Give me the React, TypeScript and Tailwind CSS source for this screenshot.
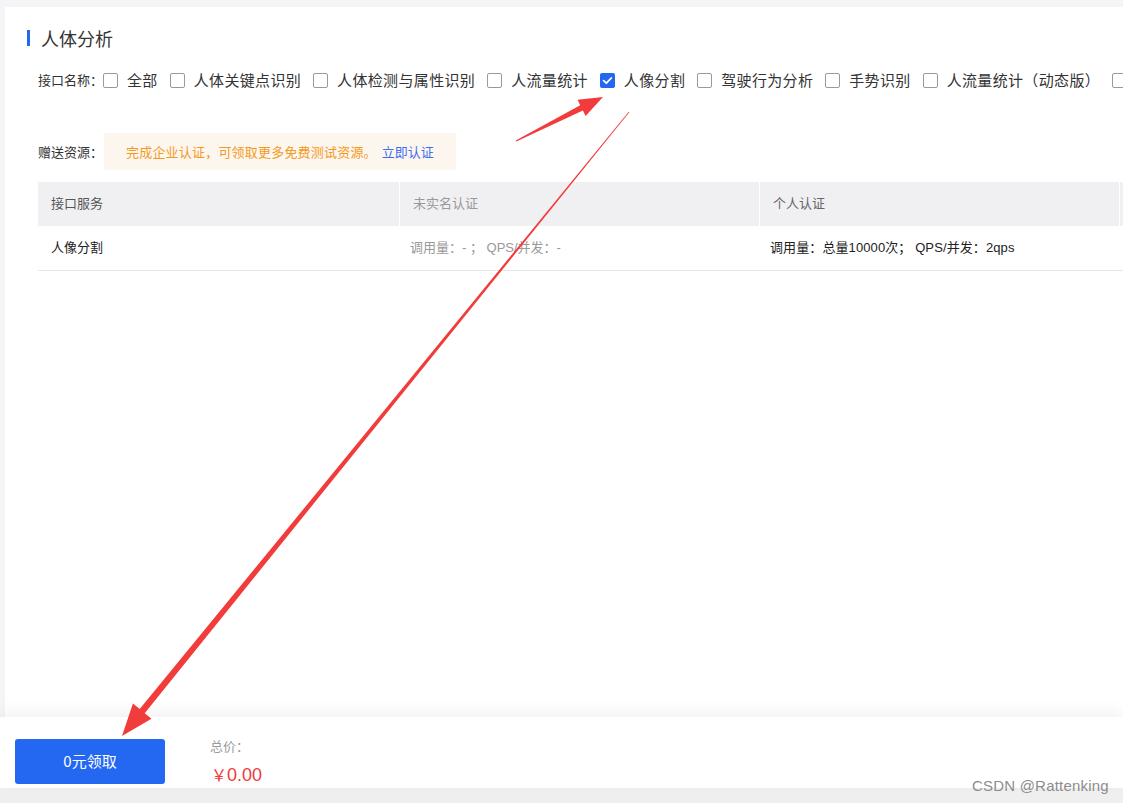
import React from "react";

const items: { label?: string; checked?: boolean }[] = [
  { label: "全部" },
  { label: "人体关键点识别" },
  { label: "人体检测与属性识别" },
  { label: "人流量统计" },
  { label: "人像分割", checked: true },
  { label: "驾驶行为分析" },
  { label: "手势识别" },
  { label: "人流量统计（动态版）" },
  {},
];

function Checkbox({ checked }: { checked?: boolean }) {
  if (checked) {
    return (
      <span className="w-[15px] h-[15px] shrink-0 rounded-[2px] bg-[#2468f2] flex items-center justify-center">
        <svg width="15" height="15" viewBox="0 0 15 15">
          <path d="M3.6 7.6l2.7 2.6 5-5.2" fill="none" stroke="#fff" strokeWidth="1.8" strokeLinecap="round" strokeLinejoin="round" />
        </svg>
      </span>
    );
  }
  return <span className="w-[15px] h-[15px] shrink-0 rounded-[2px] border border-[#9a9a9a] bg-white" />;
}

function arrowPoints(
  start: { x: number; y: number },
  tip: { x: number; y: number },
  hl: number,
  hw: number,
  sw: number,
  s0: number
) {
  const dx = tip.x - start.x;
  const dy = tip.y - start.y;
  const L = Math.hypot(dx, dy);
  const ux = dx / L, uy = dy / L;
  const nx = -uy, ny = ux;
  const bx = tip.x - hl * ux, by = tip.y - hl * uy;
  return [
    [start.x + s0 * nx, start.y + s0 * ny],
    [bx + sw * nx, by + sw * ny],
    [bx + hw * nx, by + hw * ny],
    [tip.x, tip.y],
    [bx - hw * nx, by - hw * ny],
    [bx - sw * nx, by - sw * ny],
    [start.x - s0 * nx, start.y - s0 * ny],
  ]
    .map((p) => p.map((v) => v.toFixed(1)).join(","))
    .join(" ");
}

export default function App() {
  const arrow1 = arrowPoints({ x: 516, y: 141 }, { x: 603, y: 97 }, 24, 9, 3, 0.6);
  const arrow2 = arrowPoints({ x: 629, y: 112 }, { x: 122, y: 736 }, 32, 12, 3.2, 0.35);

  return (
    <div className="relative w-full h-[803px] overflow-hidden bg-[#f5f5f7] flex flex-col font-['Liberation_Sans','Noto_Sans_CJK_SC',sans-serif] text-[#333]">
      {/* Card */}
      <div className="flex-1 min-h-0 ml-[5px] mt-[7px] bg-white overflow-hidden">
        <div className="flex items-center h-[24px] pl-[22px] mt-[19px]">
          <span className="w-[3px] h-[16px] bg-[#2468f2]" />
          <span className="ml-[11px] text-[18px] leading-[24px] text-[#333] font-['Noto_Sans_CJK_SC',sans-serif]">人体分析</span>
        </div>

        <div className="flex items-center h-[22px] mt-[19px] pl-[33px] whitespace-nowrap">
          <span className="w-[66px] text-[13px] text-[#333] font-['Noto_Sans_CJK_SC',sans-serif]">接口名称：</span>
          {items.map((it, i) => (
            <div key={i} className="flex items-center mr-[12px] shrink-0">
              <Checkbox checked={it.checked} />
              {it.label && (
                <span className="ml-[9px] text-[15px] leading-[22px] tracking-[0.34px] text-[#333] font-['Noto_Sans_CJK_SC',sans-serif]">{it.label}</span>
              )}
            </div>
          ))}
        </div>

        <div className="flex items-center mt-[42px] pl-[33px]">
          <span className="w-[66px] text-[13px] text-[#333] font-['Noto_Sans_CJK_SC',sans-serif]">赠送资源：</span>
          <div className="h-[37px] flex items-center bg-[#fdf6ee] px-[22px] text-[13px] font-['Noto_Sans_CJK_SC',sans-serif]">
            <span className="text-[#f39a1e] tracking-[0.2px]">完成企业认证，可领取更多免费测试资源。</span>
            <span className="ml-[5px] text-[#3d6ef2]">立即认证</span>
          </div>
        </div>

        <div className="mt-[12px] ml-[33px] w-[1200px] text-[13px] font-['Liberation_Sans','Noto_Sans_CJK_SC',sans-serif]">
          <div className="grid grid-cols-[361px_359px_359px_1fr] gap-x-px h-[44px] bg-white">
            <div className="bg-[#f0f0f2] flex items-center pl-[13px] text-[#555]">接口服务</div>
            <div className="bg-[#f0f0f2] flex items-center pl-[13px] text-[#999]">未实名认证</div>
            <div className="bg-[#f0f0f2] flex items-center pl-[13px] text-[#666]">个人认证</div>
            <div className="bg-[#f0f0f2]" />
          </div>
          <div className="grid grid-cols-[361px_359px_359px_1fr] gap-x-px h-[45px] border-b border-[#e8e8e8]">
            <div className="flex items-center pl-[13px] text-[#222]">人像分割</div>
            <div className="flex items-center pl-[10px] text-[#999] whitespace-pre">调用量：- ； QPS/并发：-</div>
            <div className="flex items-center pl-[10px] text-[#222] whitespace-pre tracking-[0.1px]">调用量：总量10000次； QPS/并发：2qps</div>
            <div />
          </div>
        </div>
      </div>

      {/* Footer */}
      <div className="relative z-10 h-[71px] bg-white shadow-[0_-6px_14px_rgba(0,0,0,0.05)] flex items-start pl-[15px] pt-[22px]">
        <button className="w-[150px] h-[45px] rounded-[3px] bg-[#2468f2] text-white text-[15px] font-['Noto_Sans_CJK_SC',sans-serif]">
          0元领取
        </button>
        <div className="ml-[45px] flex flex-col">
          <span className="mt-[-2px] text-[13px] leading-[18px] text-[#9a9a9a] font-['Noto_Sans_CJK_SC',sans-serif]">总价：</span>
          <span className="mt-[8px] ml-[1px] text-[18px] leading-[22px] text-[#ef3a3a]">
            <span className="font-['Noto_Sans_CJK_SC',sans-serif] text-[16px]">￥</span>0.00
          </span>
        </div>
      </div>
      <div className="h-[15px] bg-[#efefef]" />

      {/* Watermark */}
      <div className="absolute left-[972px] top-[776px] text-[15px] leading-[20px] text-[#8c8c8c] z-20 whitespace-nowrap tracking-[0.2px]">
        CSDN @Rattenking
      </div>

      {/* Annotation arrows */}
      <svg className="absolute inset-0 z-30 pointer-events-none" width="1123" height="803" viewBox="0 0 1123 803">
        <polygon points={arrow1} fill="#f23c3c" />
        <polygon points={arrow2} fill="#f23c3c" />
      </svg>
    </div>
  );
}
